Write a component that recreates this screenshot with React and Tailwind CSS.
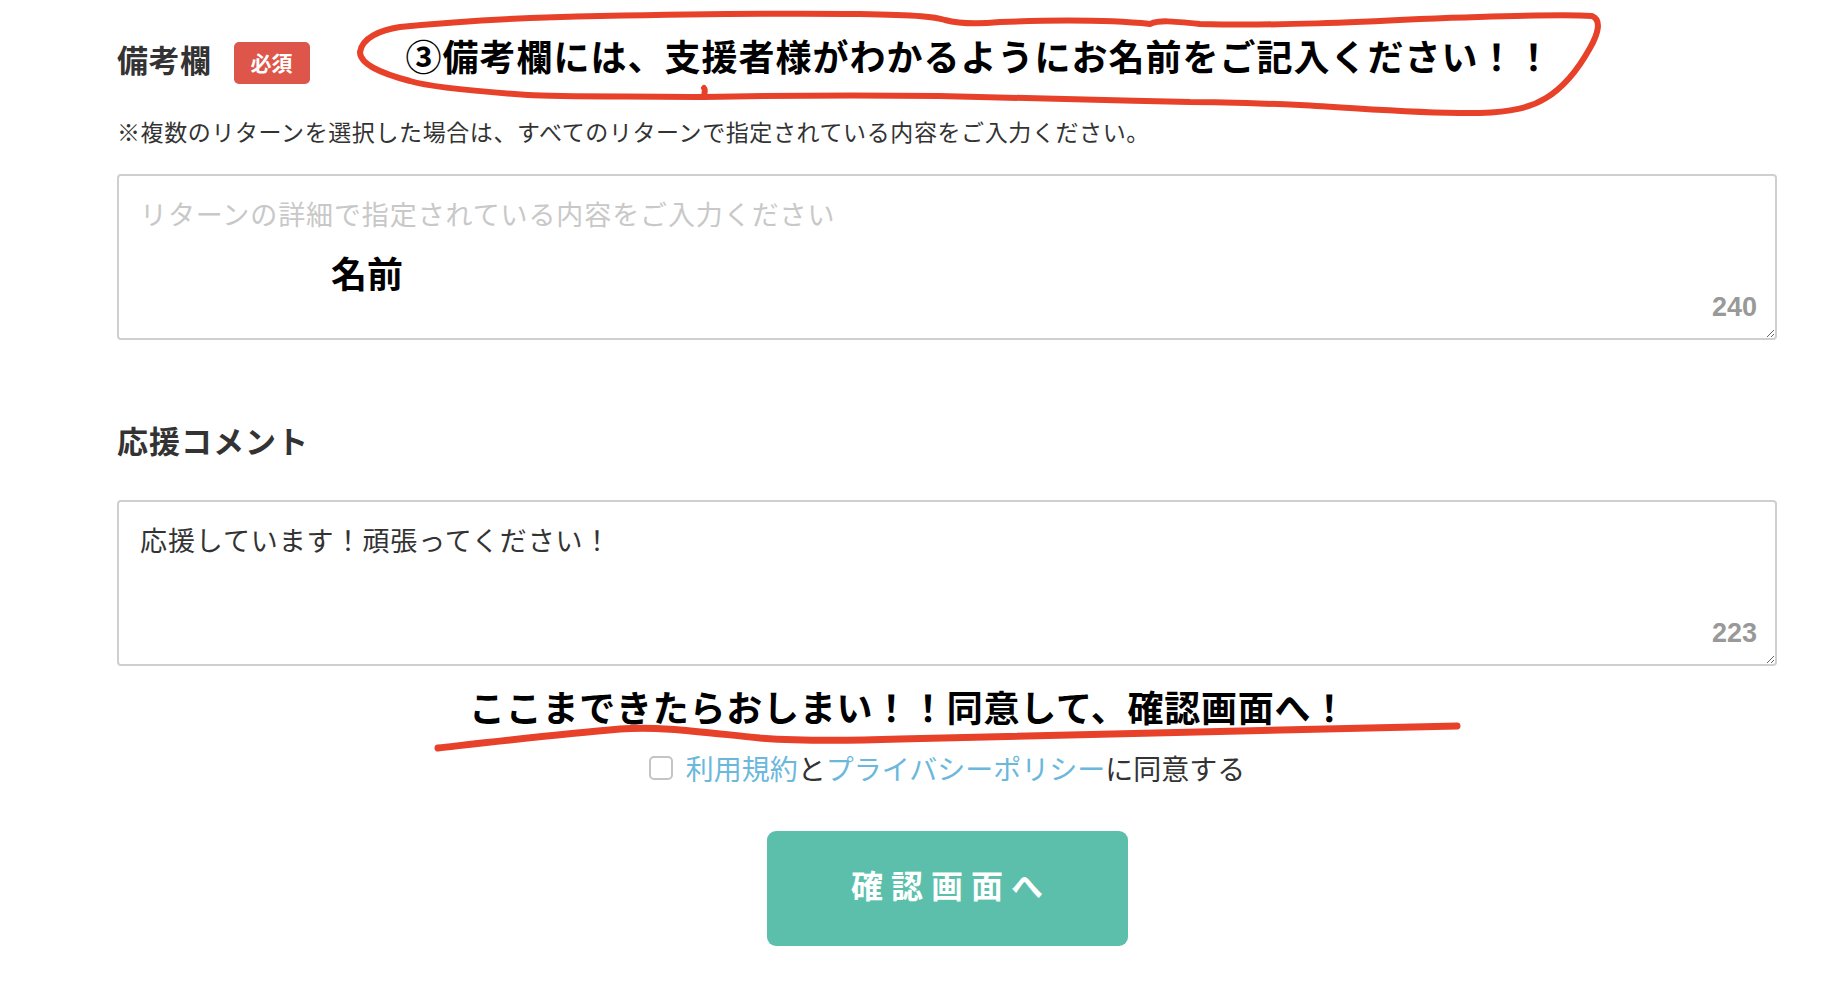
import React, { useState } from "react";

const jp = { fontFamily: '"Noto Sans CJK JP", "Noto Sans", sans-serif' };
const num = { fontFamily: '"Liberation Sans", Arial, sans-serif' };

// 手書き風の赤い囲みと下線
const Annotations = () => (
    <svg
        className="absolute left-0 top-0 pointer-events-none"
        width="1840"
        height="1001"
        viewBox="0 0 1840 1001"
        fill="none"
    >
        <path
            d="M704 97 C640 96 560 97 528 95 C470 91 430 87 410 81 C380 73 360 64 360 52 C362 38 380 30 400 27 C480 19 540 17 600 16 C700 14 780 13 860 14 C920 15 935 17 945 20 C960 24 980 24 1000 22 C1080 19 1120 21 1150 24 C1160 20 1170 21 1200 24 C1280 26 1360 22 1420 19 C1500 16 1560 14 1592 16 C1602 20 1598 34 1590 48 C1580 66 1566 86 1546 98 C1530 108 1510 112 1480 113 C1420 114 1360 108 1300 105 C1250 103 1220 102 1190 102 C1100 100 1000 97 939 96 C860 95 800 95 704 97 C704 93 706 90 704 88"
            stroke="#e8412a"
            strokeWidth="6"
            strokeLinecap="round"
            strokeLinejoin="round"
        />
        <path
            d="M438 748 C500 741 560 734 620 729 C660 726 700 732 760 738 C800 741 840 741 900 739 C1050 735 1250 730 1457 726"
            stroke="#e8412a"
            strokeWidth="7"
            strokeLinecap="round"
        />
    </svg>
);

const NoteArea = ({ placeholder, value, count, children }) => (
    <div className="relative w-full">
        <textarea
            readOnly
            placeholder={placeholder}
            value={value}
            className="block w-full h-[166px] border-2 border-[#cfcfcf] rounded-[4px] pl-[21px] pr-[20px] pt-[24px] text-[27px] leading-[28px] tracking-[0.9px] text-[#333] placeholder:text-[#c8c8c8] outline-none resize"
            style={jp}
        />
        <span
            className="absolute right-[20px] bottom-[19px] text-[27px] leading-none font-bold text-[#999]"
            style={num}
        >
            {count}
        </span>
        {children}
    </div>
);

export default function App() {
    const [agree, setAgree] = useState(false);

    return (
        <div className="relative w-[1840px] min-h-[1001px] bg-white overflow-hidden" style={jp}>
            <div className="pl-[117px] pr-[63px] pt-[42px]">
                {/* 備考欄 */}
                <div className="flex items-center h-[42px]">
                    <span className="-mt-[10px] text-[31px] leading-none font-bold text-[#333] tracking-[0.5px]">備考欄</span>
                    <span className="ml-[22px] w-[76px] h-[42px] rounded-[5px] bg-[#de5549] text-white text-[21px] font-bold flex items-center justify-center">
                        必須
                    </span>
                    <span className="ml-[96px] -translate-y-[8px] text-[36px] leading-none font-bold text-black whitespace-nowrap tracking-[1px]">
                        ③備考欄には、支援者様がわかるようにお名前をご記入ください！！
                    </span>
                </div>

                <p className="mt-[36px] text-[23px] leading-[23px] tracking-[0.6px] text-[#333] whitespace-nowrap">
                    ※複数のリターンを選択した場合は、すべてのリターンで指定されている内容をご入力ください。
                </p>

                <div className="mt-[31px]">
                    <NoteArea placeholder="リターンの詳細で指定されている内容をご入力ください" value="" count="240">
                        <span className="absolute left-[214px] top-[80px] text-[36px] leading-none font-bold text-black">
                            名前
                        </span>
                    </NoteArea>
                </div>

                {/* 応援コメント */}
                <h2 className="mt-[84px] text-[31px] leading-[31px] font-bold tracking-[1px] text-[#333]">応援コメント</h2>

                <div className="mt-[45px]">
                    <NoteArea placeholder="" value="応援しています！頑張ってください！" count="223" />
                </div>

                <p className="mt-[22px] pl-[352px] text-[36px] leading-[36px] font-bold tracking-[0.75px] text-black whitespace-nowrap">
                    ここまできたらおしまい！！同意して、確認画面へ！
                </p>

                <label className="mt-[30px] flex items-center justify-center gap-[13px] cursor-pointer">
                    <input
                        type="checkbox"
                        checked={agree}
                        onChange={(e) => setAgree(e.target.checked)}
                        className="appearance-none w-[24px] h-[24px] border-2 border-[#c4c4c4] rounded-[5px] bg-white"
                    />
                    <span className="text-[28px] leading-[28px] text-[#333]">
                        <span className="text-[#6bb8dc]">利用規約</span>と
                        <span className="text-[#6bb8dc]">プライバシーポリシー</span>に同意する
                    </span>
                </label>

                <div className="mt-[49px] flex justify-center">
                    <button className="w-[361px] h-[115px] rounded-[9px] bg-[#5bbfab] text-white text-[32px] font-bold tracking-[8px] pl-[8px] pb-[10px]">
                        確認画面へ
                    </button>
                </div>
            </div>

            <Annotations />
        </div>
    );
}
